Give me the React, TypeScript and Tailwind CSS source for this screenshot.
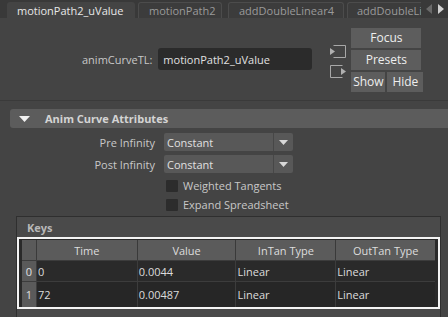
import React from "react";

// ── Tab bar ───────────────────────────────────────────────────────────────────

function Tabs() {
  return (
    <div className="flex h-[18px] shrink-0 items-end bg-[#393939] pl-[7px]">
      <div className="flex h-[16px] w-[128px] items-center rounded-t-[3px] bg-[#444444] pl-[10px] text-[#e8e8e8]">
        motionPath2_uValue
      </div>
      <div className="ml-[3px] flex h-[16px] w-[84px] items-center rounded-t-[3px] border border-b-0 border-[#4c4c4c] bg-[#3c3c3c] pl-[10px] text-[#9a9a9a]">
        motionPath2
      </div>
      <div className="ml-[6px] flex h-[16px] w-[116px] items-center rounded-t-[3px] border border-b-0 border-[#4c4c4c] bg-[#3c3c3c] pl-[10px] text-[#9a9a9a]">
        addDoubleLinear4
      </div>
      <div className="ml-[3px] flex h-[16px] w-[74px] items-center overflow-hidden whitespace-nowrap rounded-tl-[3px] border border-b-0 border-r-0 border-[#4c4c4c] bg-[#3c3c3c] pl-[9px] text-[#9a9a9a]">
        addDoubleLi
      </div>
      <div className="flex h-[18px] flex-1 items-center justify-center gap-[6px] bg-[#393939]">
        <svg width="6" height="10" viewBox="0 0 6 10"><path d="M6 0 L0 5 L6 10 Z" fill="#6a6a6a" /></svg>
        <svg width="6" height="10" viewBox="0 0 6 10"><path d="M0 0 L6 5 L0 10 Z" fill="#d0d0d0" /></svg>
      </div>
    </div>
  );
}

// ── Top: node name + buttons ──────────────────────────────────────────────────

function Btn({ children, className }: { children: React.ReactNode; className: string }) {
  return (
    <div className={`flex h-[20px] items-center justify-center bg-[#5d5d5d] text-[12px] text-[#eeeeee] ${className}`}>
      {children}
    </div>
  );
}

function NodeHeader() {
  return (
    <div className="flex h-[82px] shrink-0 items-center pl-[82px]">
      <span className="text-[#c8c8c8]">animCurveTL:</span>
      <div className="ml-[6px] flex h-[22px] w-[154px] items-center rounded-[3px] bg-[#2b2b2b] pl-[5px] text-[#e0e0e0]">
        motionPath2_uValue
      </div>
      <div className="ml-[18px] flex flex-col gap-[7px] pt-[4px]">
        <svg width="16" height="13" viewBox="0 0 16 13">
          <path d="M3.5 0.5 H15.5 V12.5 H3.5" fill="none" stroke="#a8a8a8" />
          <path d="M0 3 L5 6.5 L0 10 Z" fill="#b0b0b0" />
        </svg>
        <svg width="16" height="13" viewBox="0 0 16 13">
          <path d="M12.5 0.5 H0.5 V12.5 H12.5" fill="none" stroke="#a8a8a8" />
          <path d="M11 3 L16 6.5 L11 10 Z" fill="#b0b0b0" />
        </svg>
      </div>
      <div className="ml-[5px] mt-[2px] flex w-[72px] flex-col gap-[2px]">
        <Btn className="w-[70px]">Focus</Btn>
        <Btn className="w-[70px]">Presets</Btn>
        <div className="flex gap-[2px]">
          <Btn className="w-[34px]">Show</Btn>
          <Btn className="w-[36px]">Hide</Btn>
        </div>
      </div>
    </div>
  );
}

// ── Anim Curve Attributes ─────────────────────────────────────────────────────

function Dropdown({ label }: { label: string }) {
  return (
    <div className="flex h-[18px] items-center">
      <span className="w-[155px] text-right text-[#c8c8c8]">{label}</span>
      <div className="ml-[9px] flex h-[18px] w-[129px] rounded-[2px] bg-[#585858]">
        <span className="flex flex-1 items-center pl-[3px] text-[#e0e0e0]">Constant</span>
        <div className="flex w-[20px] items-center justify-center border-l border-[#474747]">
          <svg width="9" height="5" viewBox="0 0 9 5"><path d="M0 0 H9 L4.5 5 Z" fill="#d8d8d8" /></svg>
        </div>
      </div>
    </div>
  );
}

function Check({ label }: { label: string }) {
  return (
    <div className="flex h-[19px] items-center pl-[166px]">
      <div className="h-[12px] w-[12px] rounded-[1px] bg-[#2c2c2c]" />
      <span className="ml-[5px] text-[#c8c8c8]">{label}</span>
    </div>
  );
}

// ── Keys table ────────────────────────────────────────────────────────────────

const cols = ["Time", "Value", "InTan Type", "OutTan Type"];
const keys = [
  ["0", "0.0044", "Linear", "Linear"],
  ["72", "0.00487", "Linear", "Linear"],
];
const widths = ["w-[101px]", "w-[99px]", "w-[100px]", "w-[100px]"];

function KeysTable() {
  return (
    <div className="mt-[2px] ml-[16px] mr-[7px] flex flex-1 flex-col border border-b-0 border-[#2f2f2f] bg-[#4a4a4a]">
      <div className="flex h-[20px] shrink-0 items-center pl-[10px] font-bold text-[#b8b8b8]">Keys</div>
      <div className="border-2 border-[#f4f4f4] bg-[#2a2a2a] pl-[3px] pt-[1px] pr-[3px]">
        <div className="flex h-[20px] bg-[#3a3a3a]">
          <div className="w-[14px] bg-[#5a5a5a]" />
          {cols.map((c, i) => (
            <div key={c} className={`${widths[i]} flex items-center justify-center border-l border-[#3a3a3a] bg-[#5b5b5b] text-[#dddddd]`}>
              {c}
            </div>
          ))}
        </div>
        {keys.map((row, r) => (
          <div key={r} className={`flex ${r === 0 ? "h-[21px]" : "h-[26px]"} border-t border-[#3c3c3c]`}>
            <div className="flex w-[14px] items-center justify-center bg-[#5a5a5a] text-[#e0e0e0]">{r}</div>
            {row.map((v, i) => (
              <div key={i} className={`${widths[i]} flex items-center border-l border-[#3c3c3c] pl-[1px] text-[#dcdcdc] ${r === 0 ? "bg-[#2a2a2a]" : "bg-[#262626]"}`}>
                {v}
              </div>
            ))}
          </div>
        ))}
      </div>
    </div>
  );
}

// ── App ───────────────────────────────────────────────────────────────────────

export default function App() {
  return (
    <div className="flex h-[317px] w-[448px] flex-col overflow-hidden bg-[#444444] font-['Open_Sans',sans-serif] text-[11px] leading-none">
      <Tabs />
      <NodeHeader />
      <div className="flex flex-1 flex-col border-t border-[#3a3a3a] bg-[#444444] pt-[8px]">
        <div className="ml-[10px] flex h-[19px] shrink-0 items-center rounded-l-[3px] bg-[#5c5c5c] pl-[9px]">
          <svg width="11" height="6" viewBox="0 0 11 6"><path d="M0 0 H11 L5.5 6 Z" fill="#f0f0f0" /></svg>
          <span className="ml-[15px] font-bold text-[#d4d4d4]">Anim Curve Attributes</span>
        </div>
        <div className="mt-[5px] flex flex-col gap-[4px]">
          <Dropdown label="Pre Infinity" />
          <Dropdown label="Post Infinity" />
        </div>
        <div className="mt-[-1px] flex flex-col pt-[4px]">
          <Check label="Weighted Tangents" />
          <Check label="Expand Spreadsheet" />
        </div>
        <KeysTable />
      </div>
    </div>
  );
}
